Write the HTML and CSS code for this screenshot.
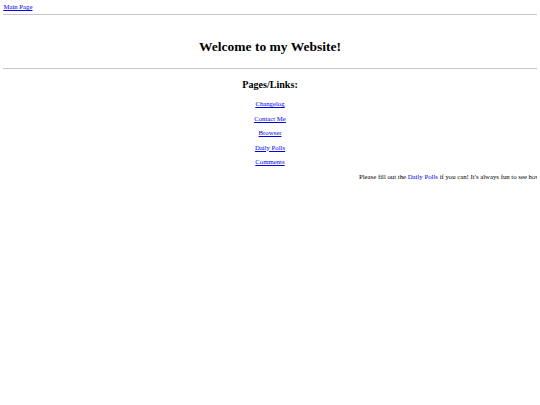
FILE: index.html
```html
<!DOCTYPE html>
<html>
<head>
<meta charset="utf-8">
<title>Welcome</title>
<link rel="stylesheet" href="styles.css">
</head>
<body class="page">
<div class="nav"><a href="#">Main Page</a></div>
<hr class="rule rule-top">
<h1 class="title">Welcome to my Website!</h1>
<hr class="rule rule-bottom">
<h2 class="subtitle">Pages/Links:</h2>
<div class="links">
<p class="link-row"><a href="#">Changelog</a></p>
<p class="link-row"><a href="#">Contact Me</a></p>
<p class="link-row"><a href="#">Browser</a></p>
<p class="link-row"><a href="#">Daily Polls</a></p>
<p class="link-row"><a href="#">Comments</a></p>
</div>
<div class="ticker"><span class="ticker-text">Please fill out the <a href="#">Daily Polls</a> if you can! It's always fun to see how everyone answers!</span></div>
</body>
</html>
```
FILE: styles.css
```css
html {
  background: #fff;
}
.page {
  margin: 3.4px 3.4px 0;
  display: flex;
  flex-direction: column;
  font-family: "Liberation Serif", "Times New Roman", serif;
  font-size: 6.75px;
  line-height: 7.75px;
  color: #000;
}
a {
  color: #0000ee;
  text-decoration: underline;
}
.rule {
  margin: 0;
  height: 0;
  border: 0;
  border-top: 1px solid #c6c6c6;
}
.rule-top {
  margin-top: 2.4px;
}
.title {
  margin: 24.7px 0 0;
  text-align: center;
  font-size: 13.5px;
  line-height: 15.5px;
  font-weight: bold;
}
.rule-bottom {
  margin-top: 13.25px;
}
.subtitle {
  margin: 10.2px 0 0;
  text-align: center;
  font-size: 10.1px;
  line-height: 11.6px;
  font-weight: bold;
}
.links {
  display: flex;
  flex-direction: column;
  gap: 6.75px;
  margin-top: 9.3px;
}
.link-row {
  margin: 0;
  text-align: center;
}
.ticker {
  margin-top: 6.75px;
  overflow: hidden;
  white-space: nowrap;
}
.ticker-text {
  display: inline-block;
  padding-left: 355.6px;
}
```
